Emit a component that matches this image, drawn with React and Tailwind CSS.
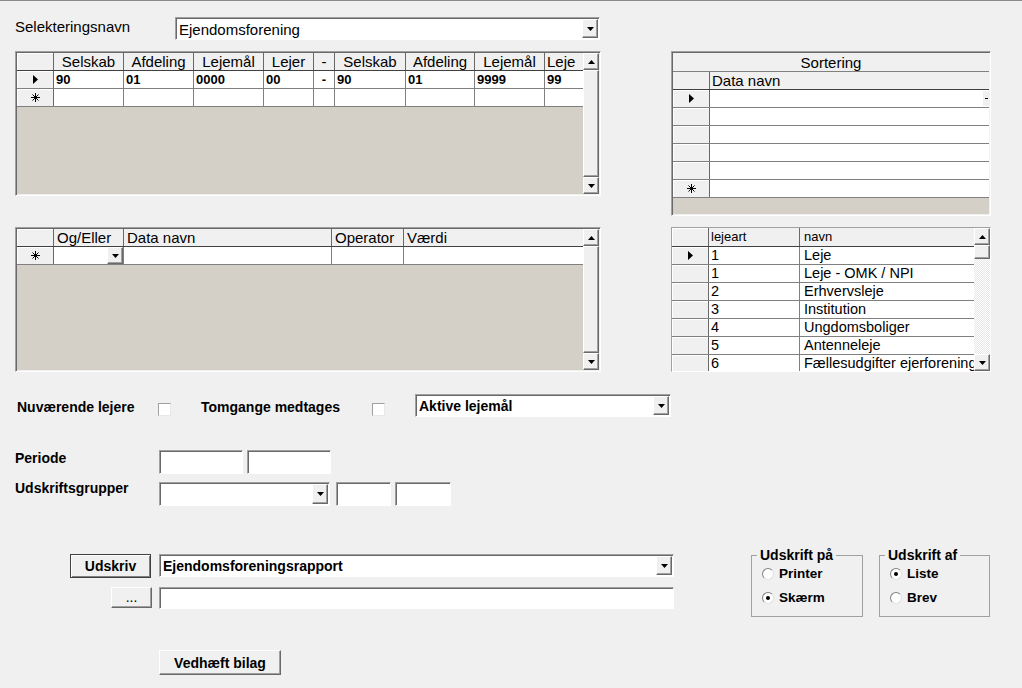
import React from "react";

const F = "font-['Liberation_Sans',Arial,sans-serif]";
const sunken =
  "border border-t-[#a0a0a0] border-l-[#a0a0a0] border-r-white border-b-white shadow-[inset_1px_1px_0_#696969]";
const raised =
  "border border-t-white border-l-white border-r-[#696969] border-b-[#696969] shadow-[inset_-1px_-1px_0_#a0a0a0]";
const gridOuter =
  "border border-t-[#a0a0a0] border-l-[#a0a0a0] border-r-white border-b-white shadow-[inset_1px_1px_0_#696969]";
const sel =
  "w-[37px] shrink-0 border-r border-[#696969] bg-[#f0f0f0] flex items-center justify-center shadow-[inset_1px_1px_0_#ffffff]";

function DownArrow() {
  return (
    <svg width="7" height="4" viewBox="0 0 7 4">
      <path d="M0 0h7L3.5 4z" fill="#000" />
    </svg>
  );
}

function UpArrow() {
  return (
    <svg width="7" height="4" viewBox="0 0 7 4">
      <path d="M0 4h7L3.5 0z" fill="#000" />
    </svg>
  );
}

function Pointer() {
  return (
    <svg width="5" height="9" viewBox="0 0 5 9">
      <path d="M0 0l5 4.5L0 9z" fill="#000" />
    </svg>
  );
}

function Star() {
  return (
    <svg width="9" height="9" viewBox="0 0 9 9" stroke="#000" strokeWidth="1">
      <path d="M4.5 0v9M0 4.5h9M1.5 1.5l6 6M7.5 1.5l-6 6" />
    </svg>
  );
}

function DropBtn({ className = "" }) {
  return (
    <div className={`w-[16px] shrink-0 flex items-center justify-center bg-[#f0f0f0] ${raised} ${className}`}>
      <DownArrow />
    </div>
  );
}

function Combo({ box, text, textCls }) {
  return (
    <div className={`${box} bg-white ${sunken} flex p-[1px] shrink-0`}>
      <div className={`flex-1 pl-[2px] overflow-hidden whitespace-nowrap ${textCls}`}>{text}</div>
      <DropBtn />
    </div>
  );
}

function Field({ box }) {
  return <div className={`${box} bg-white ${sunken} shrink-0`} />;
}

function Check() {
  return <div className="w-[13px] h-[13px] shrink-0 bg-white border border-t-[#a0a0a0] border-l-[#a0a0a0] border-r-[#e8e8e8] border-b-[#e8e8e8]" />;
}

function Radio({ on, label }) {
  return (
    <div className="flex items-center gap-[5px] h-[16px]">
      <div className="w-[12px] h-[12px] rounded-full bg-white border border-t-[#808080] border-l-[#808080] border-r-[#e0e0e0] border-b-[#e0e0e0] flex items-center justify-center">
        {on && <div className="w-[4px] h-[4px] rounded-full bg-black" />}
      </div>
      <span className="text-[13.5px] leading-[16px] font-bold">{label}</span>
    </div>
  );
}

function VScroll({ small }) {
  return (
    <div className="w-[16px] shrink-0 flex flex-col bg-[#f0f0f0]">
      <div className={`h-[17px] shrink-0 flex items-center justify-center ${raised}`}>
        <UpArrow />
      </div>
      {small ? (
        <>
          <div className={`h-[14px] shrink-0 bg-[#f0f0f0] ${raised}`} />
          <div className="flex-1 bg-[repeating-conic-gradient(#ffffff_0_25%,#e6e6e6_0_50%)] bg-[length:2px_2px]" />
        </>
      ) : (
        <div className={`flex-1 bg-[#f0f0f0] ${raised}`} />
      )}
      <div className={`h-[17px] shrink-0 flex items-center justify-center ${raised}`}>
        <DownArrow />
      </div>
    </div>
  );
}

const g1 = [
  { w: "w-[70px]", h: "Selskab", v: "90" },
  { w: "w-[70px]", h: "Afdeling", v: "01" },
  { w: "w-[70px]", h: "Lejemål", v: "0000" },
  { w: "w-[50px]", h: "Lejer", v: "00" },
  { w: "w-[21px]", h: "-", v: "-", c: true },
  { w: "w-[71px]", h: "Selskab", v: "90" },
  { w: "w-[69px]", h: "Afdeling", v: "01" },
  { w: "w-[70px]", h: "Lejemål", v: "9999" },
];

function GridOne() {
  return (
    <div className={`w-[586px] h-[145px] flex ${gridOuter} p-[1px]`}>
      <div className="flex-1 flex flex-col bg-[#d4d0c8] overflow-hidden">
        <div className="flex h-[18px] bg-[#f0f0f0] border-b border-[#404040] text-[15px] leading-[17px]">
          <div className={sel} />
          {g1.map((c, i) => (
            <div key={i} className={`${c.w} shrink-0 border-r border-[#696969] text-center`}>{c.h}</div>
          ))}
          <div className="flex-1 pl-[2px] whitespace-nowrap overflow-hidden">Leje</div>
        </div>
        <div className="flex h-[18px] bg-white border-b border-[#808080] text-[13px] leading-[17px] font-bold">
          <div className={sel}><Pointer /></div>
          {g1.map((c, i) => (
            <div key={i} className={`${c.w} shrink-0 border-r border-[#808080] ${c.c ? "text-center" : "pl-[2px]"}`}>{c.v}</div>
          ))}
          <div className="flex-1 pl-[2px]">99</div>
        </div>
        <div className="flex h-[18px] bg-white border-b border-[#808080]">
          <div className={sel}><Star /></div>
          {g1.map((c, i) => (
            <div key={i} className={`${c.w} shrink-0 border-r border-[#808080]`} />
          ))}
          <div className="flex-1" />
        </div>
      </div>
      <VScroll />
    </div>
  );
}

function Sortering() {
  const rows = [0, 1, 2, 3, 4, 5];
  return (
    <div className={`w-[320px] h-[165px] flex flex-col ${gridOuter} p-[1px]`}>
      <div className="flex-1 flex flex-col bg-[#d4d0c8] overflow-hidden text-[15px] leading-[17px]">
        <div className="h-[19px] shrink-0 bg-[#f0f0f0] border-b border-[#808080] text-center pt-[1px]">Sortering</div>
        <div className="flex h-[18px] shrink-0 bg-[#f0f0f0] border-b border-[#404040]">
          <div className="w-[37px] shrink-0 border-r border-[#696969]" />
          <div className="flex-1 pl-[2px]">Data navn</div>
        </div>
        {rows.map((r) => (
          <div key={r} className="flex h-[18px] shrink-0 bg-white border-b border-[#808080]">
            <div className={sel}>{r === 0 ? <Pointer /> : r === 5 ? <Star /> : null}</div>
            <div className="flex-1 flex justify-end">
              {r === 0 && (
                <div className="w-[7px] h-[16px] bg-[#f0f0f0] border-t border-l border-white flex items-center">
                  <div className="w-[3px] h-[1px] bg-black ml-[2px]" />
                </div>
              )}
            </div>
          </div>
        ))}
      </div>
    </div>
  );
}

function GridTwo() {
  return (
    <div className={`w-[586px] h-[145px] flex ${gridOuter} p-[1px]`}>
      <div className="flex-1 flex flex-col bg-[#d4d0c8] overflow-hidden text-[15px] leading-[17px]">
        <div className="flex h-[18px] bg-[#f0f0f0] border-b border-[#404040]">
          <div className={sel} />
          <div className="w-[70px] shrink-0 border-r border-[#696969] pl-[3px]">Og/Eller</div>
          <div className="w-[208px] shrink-0 border-r border-[#696969] pl-[3px]">Data navn</div>
          <div className="w-[72px] shrink-0 border-r border-[#696969] pl-[3px]">Operator</div>
          <div className="flex-1 pl-[3px]">Værdi</div>
        </div>
        <div className="flex h-[18px] bg-white border-b border-[#808080]">
          <div className={sel}><Star /></div>
          <div className="w-[70px] shrink-0 border-r border-[#808080] flex justify-end">
            <DropBtn />
          </div>
          <div className="w-[208px] shrink-0 border-r border-[#808080]" />
          <div className="w-[72px] shrink-0 border-r border-[#808080]" />
          <div className="flex-1" />
        </div>
      </div>
      <VScroll />
    </div>
  );
}

const lejearter = [
  ["1", "Leje"],
  ["1", "Leje - OMK / NPI"],
  ["2", "Erhvervsleje"],
  ["3", "Institution"],
  ["4", "Ungdomsboliger"],
  ["5", "Antenneleje"],
  ["6", "Fællesudgifter ejerforening"],
];

function Lejeart() {
  return (
    <div className="w-[320px] h-[145px] flex border border-t-[#a0a0a0] border-l-[#a0a0a0] border-r-white border-b-white">
      <div className="flex-1 flex flex-col bg-[#d4d0c8] overflow-hidden">
        <div className="flex h-[19px] shrink-0 bg-[#f0f0f0] border-b border-[#404040] text-[13px] leading-[18px]">
          <div className={sel} />
          <div className="w-[91px] shrink-0 border-r border-[#696969] pl-[2px]">lejeart</div>
          <div className="flex-1 pl-[4px]">navn</div>
        </div>
        {lejearter.map(([k, n], i) => (
          <div key={i} className="flex h-[18px] shrink-0 bg-white border-b border-[#808080] text-[14.5px] leading-[17px]">
            <div className={sel}>{i === 0 && <Pointer />}</div>
            <div className="w-[91px] shrink-0 border-r border-[#808080] pl-[2px]">{k}</div>
            <div className="flex-1 pl-[4px] whitespace-nowrap overflow-hidden">{n}</div>
          </div>
        ))}
      </div>
      <VScroll small />
    </div>
  );
}

export default function App() {
  const btn = `bg-[#f0f0f0] ${raised} flex items-center justify-center shrink-0`;
  return (
    <div className={`w-[1022px] h-[688px] bg-[#f0f0f0] border-t border-[#8a8a8a] overflow-hidden text-black ${F}`}>
      <div className="flex items-start pt-[16px] pl-[15px]">
        <div className="w-[160px] mt-[1px] text-[15px] leading-[18px]">Selekteringsnavn</div>
        <Combo box="w-[425px] h-[23px]" text="Ejendomsforening" textCls="text-[15px] leading-[18px] pt-[2px]" />
      </div>

      <div className="flex items-start mt-[11px] pl-[15px]">
        <GridOne />
        <div className="ml-[70px]">
          <Sortering />
        </div>
      </div>

      <div className="flex items-start mt-[11px] pl-[15px]">
        <GridTwo />
        <div className="ml-[70px]">
          <Lejeart />
        </div>
      </div>

      <div className="flex items-start mt-[22px] h-[23px] text-[14px] leading-[16px] font-bold">
        <div className="ml-[17px] w-[141px] mt-[5px] whitespace-nowrap">Nuværende lejere</div>
        <div className="mt-[9px]"><Check /></div>
        <div className="ml-[30px] w-[171px] mt-[5px] whitespace-nowrap">Tomgange medtages</div>
        <div className="mt-[9px]"><Check /></div>
        <div className="ml-[30px]">
          <Combo box="w-[256px] h-[23px]" text="Aktive lejemål" textCls="text-[14px] leading-[16px] font-bold pt-[2px]" />
        </div>
      </div>

      <div className="flex items-start mt-[33px] text-[14px] leading-[16px] font-bold">
        <div className="ml-[15px] w-[144px]">Periode</div>
        <Field box="w-[84px] h-[24px]" />
        <Field box="ml-[4px] w-[84px] h-[24px]" />
      </div>

      <div className="flex items-start mt-[8px] text-[14px] leading-[16px] font-bold">
        <div className="ml-[15px] w-[144px] -mt-[2px]">Udskriftsgrupper</div>
        <Combo box="w-[171px] h-[24px]" text="" textCls="" />
        <Field box="ml-[6px] w-[55px] h-[24px]" />
        <Field box="ml-[4px] w-[56px] h-[24px]" />
      </div>

      <div className="flex items-start mt-[41px] text-[14px] leading-[16px] font-bold">
        <div className="ml-[70px] w-[604px] pt-[7px] shrink-0">
          <div className="flex">
            <button className="w-[81px] h-[24px] shrink-0 bg-[#f0f0f0] border border-[#404040] shadow-[inset_1px_1px_0_#ffffff,inset_-1px_-1px_0_#808080] flex items-center justify-center">
              Udskriv
            </button>
            <div className="ml-[8px]">
              <Combo box="w-[515px] h-[23px]" text="Ejendomsforeningsrapport" textCls="pt-[2px]" />
            </div>
          </div>
          <div className="flex mt-[9px]">
            <button className={`ml-[41px] w-[41px] h-[21px] font-normal pb-[2px] ${btn}`}>...</button>
            <Field box="ml-[7px] w-[515px] h-[22px]" />
          </div>
          <button className={`mt-[41px] ml-[89px] w-[122px] h-[25px] ${btn}`}>Vedhæft bilag</button>
        </div>

        <fieldset className="ml-[77px] w-[112px] h-[70px] border border-[#a0a0a0] pl-[5px] shrink-0">
          <legend className="px-[3px]">Udskrift på</legend>
          <div className="pl-[5px] pt-[3px] flex flex-col gap-[8px]">
            <Radio label="Printer" />
            <Radio on label="Skærm" />
          </div>
        </fieldset>

        <fieldset className="ml-[16px] w-[111px] h-[70px] border border-[#a0a0a0] pl-[5px] shrink-0">
          <legend className="px-[3px]">Udskrift af</legend>
          <div className="pl-[5px] pt-[3px] flex flex-col gap-[8px]">
            <Radio on label="Liste" />
            <Radio label="Brev" />
          </div>
        </fieldset>
      </div>
    </div>
  );
}
